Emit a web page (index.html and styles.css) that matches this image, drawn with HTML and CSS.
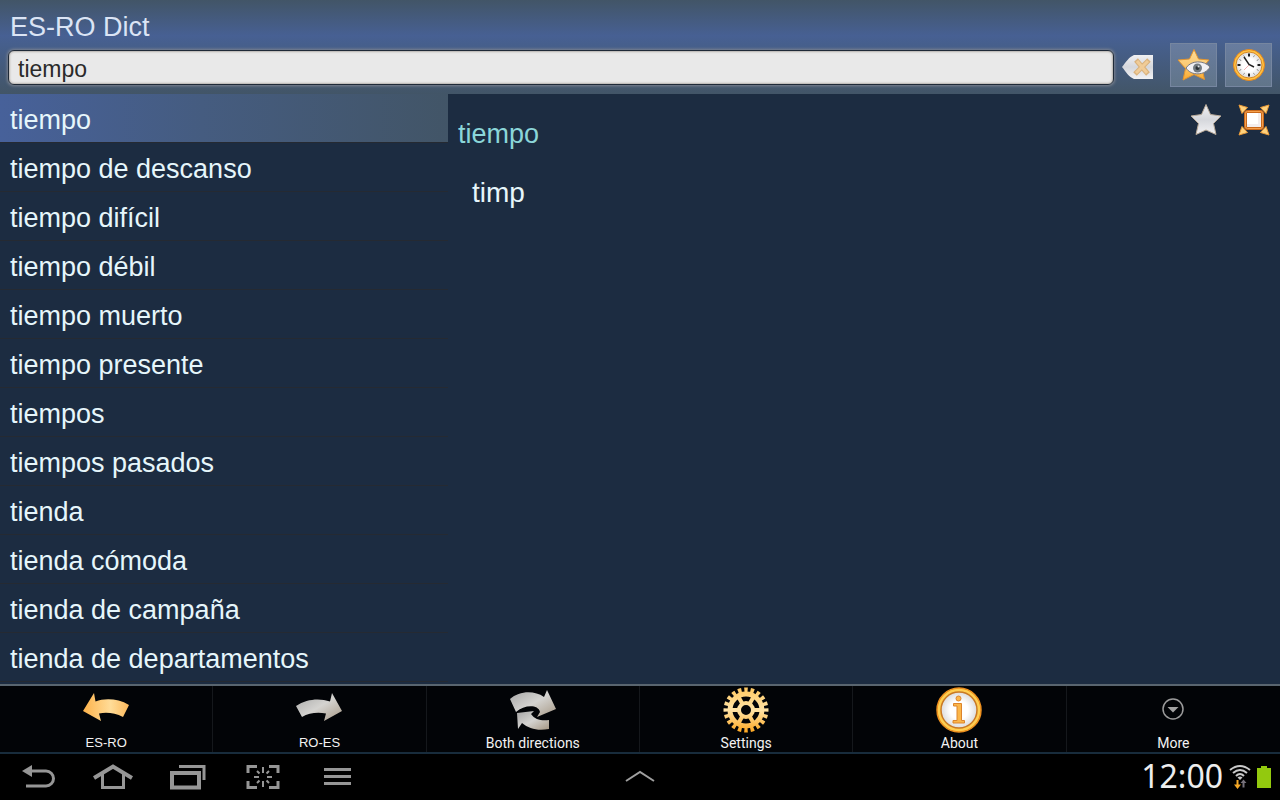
FILE: index.html
```
<!DOCTYPE html>
<html lang="es">
<head>
    <meta charset="UTF-8">
    <meta name="viewport" content="width=device-width, initial-scale=1.0">
    <title>ES-RO Dict</title>
    <link rel="stylesheet" href="styles.css">
</head>
<body>
    <!-- shared gradients for the icons -->
    <svg class="defs" width="0" height="0" aria-hidden="true">
        <defs>
            <linearGradient id="gold" x1="0" y1="0" x2="0" y2="1">
                <stop offset="0" stop-color="#fddc9a"/>
                <stop offset="0.5" stop-color="#fbcb74"/>
                <stop offset="1" stop-color="#fba92c"/>
            </linearGradient>
            <linearGradient id="goldSide" x1="0" y1="0" x2="1" y2="0">
                <stop offset="0" stop-color="#fdb24a"/>
                <stop offset="0.6" stop-color="#ffdc98"/>
                <stop offset="1" stop-color="#fcb85a"/>
            </linearGradient>
            <linearGradient id="silver" x1="0" y1="0" x2="1" y2="1">
                <stop offset="0" stop-color="#a5a5a5"/>
                <stop offset="0.5" stop-color="#d4d3d0"/>
                <stop offset="1" stop-color="#a69885"/>
            </linearGradient>
            <linearGradient id="pale" x1="0" y1="0" x2="0" y2="1">
                <stop offset="0" stop-color="#f0f0f2"/>
                <stop offset="0.5" stop-color="#d5d7dc"/>
                <stop offset="1" stop-color="#f2f2f4"/>
            </linearGradient>
            <linearGradient id="gearGold" gradientUnits="userSpaceOnUse" x1="0" y1="0" x2="0" y2="46">
                <stop offset="0" stop-color="#ffc860"/>
                <stop offset="0.5" stop-color="#ffe3a6"/>
                <stop offset="1" stop-color="#fda51c"/>
            </linearGradient>
            <radialGradient id="face">
                <stop offset="0.5" stop-color="#ffffff"/>
                <stop offset="1" stop-color="#dcdcdc"/>
            </radialGradient>
        </defs>
    </svg>

    <header class="header">
        <h1 class="title">ES-RO Dict</h1>
        <form class="search" onsubmit="return false">
            <input class="search-input" type="text" value="tiempo" aria-label="Buscar">
            <button class="clear-btn" type="button" aria-label="Borrar">
                <svg width="32" height="26" viewBox="0 0 32 26">
                    <path d="M0 13 C4 8 7 3 12 1 H31 V25 H12 C7 23 4 18 0 13 Z" fill="url(#pale)"/>
                    <path d="M14 6 L26 20 M27 6 L13 20" stroke="#d9b27d" stroke-width="5"/>
                    <path d="M15 7 L25 19 M26 7 L14 19" stroke="#f0cc98" stroke-width="3"/>
                </svg>
            </button>
            <button class="tool-btn" type="button" aria-label="Favoritos">
                <svg width="34" height="34" viewBox="0 0 34 34">
                    <path d="M17 1.500 L21.500 11 L32 12 L25 20 L27.500 31.500 L17 26.500 L6 32 L8.500 20.500 L1 12 L12.500 11 Z" fill="url(#gold)" stroke="#e2942f" stroke-width="1"/>
                    <path d="M9 20 C14 12 27 12 33 19 C28 28 14 28 9 20 Z" fill="#f0f0f4" stroke="#77767c" stroke-width="1"/>
                    <circle cx="20.500" cy="20" r="4.500" fill="#727a80"/>
                    <circle cx="20.500" cy="20" r="2" fill="#2c3236"/>
                    <circle cx="21.500" cy="18.500" r="1" fill="#dfe3e6"/>
                </svg>
            </button>
            <button class="tool-btn" type="button" aria-label="Historial">
                <svg width="34" height="34" viewBox="0 0 34 34">
                    <circle cx="17" cy="17" r="15.500" fill="#ffc342" stroke="#e5841b" stroke-width="1"/>
                    <circle cx="17" cy="17" r="13" fill="url(#face)" stroke="#d88825" stroke-width="1"/>
                    <circle cx="17" cy="17" r="10" fill="none" stroke="#444" stroke-width="2" stroke-dasharray="1 11" stroke-dashoffset="0.500" pathLength="144"/>
                    <path d="M17 5.500 V8.500 M17 25.500 V28.500 M5.500 17 H8.500 M25.500 17 H28.500" stroke="#222" stroke-width="2"/>
                    <path d="M17 17 L12 22" stroke="#f4b3b3" stroke-width="1"/>
                    <path d="M12 9 L17 16.500 L22 19" fill="none" stroke="#222" stroke-width="1.500"/>
                </svg>
            </button>
        </form>
    </header>

    <main class="content">
        <ul class="word-list">
            <li><button class="word selected" type="button">tiempo</button></li>
            <li><button class="word" type="button">tiempo de descanso</button></li>
            <li><button class="word" type="button">tiempo difícil</button></li>
            <li><button class="word" type="button">tiempo débil</button></li>
            <li><button class="word" type="button">tiempo muerto</button></li>
            <li><button class="word" type="button">tiempo presente</button></li>
            <li><button class="word" type="button">tiempos</button></li>
            <li><button class="word" type="button">tiempos pasados</button></li>
            <li><button class="word" type="button">tienda</button></li>
            <li><button class="word" type="button">tienda cómoda</button></li>
            <li><button class="word" type="button">tienda de campaña</button></li>
            <li><button class="word" type="button">tienda de departamentos</button></li>
        </ul>

        <article class="entry">
            <div class="entry-text">
                <h2 class="headword">tiempo</h2>
                <p class="translation">timp</p>
            </div>
            <div class="entry-actions">
                <button class="icon-btn" type="button" aria-label="Añadir a favoritos">
                    <svg width="32" height="32" viewBox="0 0 32 32">
                        <path d="M16 0.500 L20.500 10.500 L31 12 L23.500 19.500 L26 30.500 L16 26 L6 30.500 L8.500 19.500 L1 12 L11.500 10.500 Z" fill="url(#pale)" stroke="#b9aa98" stroke-width="1"/>
                    </svg>
                </button>
                <button class="icon-btn" type="button" aria-label="Pantalla completa">
                    <svg width="32" height="32" viewBox="0 0 32 32">
                        <path d="M1 1 L9.500 3.500 L4 9.500 Z M31 1 L22.500 3.500 L28 9.500 Z M1 31 L9.500 28.500 L4 22.500 Z M31 31 L22.500 28.500 L28 22.500 Z" fill="#ffd27c" stroke="#e99a38" stroke-width="1"/>
                        <rect x="7.500" y="7.500" width="17" height="17" rx="2" fill="#f3eeee" stroke="#c9691c" stroke-width="3"/>
                        <rect x="7.500" y="7.500" width="17" height="17" rx="2" fill="none" stroke="#f5a04c" stroke-width="1"/>
                        <rect x="9" y="9" width="11" height="11" fill="#fff"/>
                    </svg>
                </button>
            </div>
        </article>
    </main>

    <nav class="menu">
        <button class="menu-item arial" type="button">
            <span class="menu-icon">
                <svg width="48" height="48" viewBox="0 0 48 48">
                    <path d="M1 25 L12 7 L13.500 15.500 C23 12 36 12.500 47 19 L41 31 C33 27 25 26 17 27.500 L19 35 Z" fill="url(#goldSide)"/>
                </svg>
            </span>
            ES-RO
        </button>
        <button class="menu-item arial" type="button">
            <span class="menu-icon">
                <svg width="48" height="48" viewBox="0 0 48 48">
                    <path d="M47 25 L37 7 L35 15.500 C25 12 12 12.500 1 20 L7 31 C14 27 22 26 31 27.500 L29 35 Z" fill="url(#silver)"/>
                </svg>
            </span>
            RO-ES
        </button>
        <button class="menu-item" type="button">
            <span class="menu-icon">
                <svg width="48" height="48" viewBox="0 0 48 48">
                    <path d="M1 13 C10 5 25 4 35 11 L38 4 L47 23 L28 31 L31 26 C29 18 15 19 7 26 Z" fill="url(#silver)"/>
                    <path d="M8 27 L25 25 L22 28 C26 34 33 35 40 34 L40 43 C29 45 20 43 13 37 L9 43 Z" fill="url(#silver)"/>
                </svg>
            </span>
            Both directions
        </button>
        <button class="menu-item" type="button">
            <span class="menu-icon">
                <svg width="46" height="46" viewBox="0 0 46 46">
                    <g fill="none" stroke="url(#gearGold)">
                        <circle cx="23" cy="23" r="20" stroke-width="5" pathLength="40" stroke-dasharray="1.100 0.900" stroke-dashoffset="0.550"/>
                        <circle cx="23" cy="23" r="16" stroke-width="5"/>
                        <circle cx="23" cy="23" r="7" stroke-width="4"/>
                        <path d="M7 23.100 H16 M30 23 H39.100 M15 9 L19.500 17 M31 9 L26.500 17 M15 37 L19.500 29 M31 37 L26.500 29" stroke-width="4"/>
                    </g>
                </svg>
            </span>
            Settings
        </button>
        <button class="menu-item" type="button">
            <span class="menu-icon">
                <svg width="46" height="46" viewBox="0 0 46 46">
                    <circle cx="23" cy="23" r="22" fill="#ffce50" stroke="#ee901f" stroke-width="1.500"/>
                    <circle cx="23" cy="23" r="18" fill="url(#face)" stroke="#c97924" stroke-width="1.500"/>
                    <g fill="#fbb649" stroke="#dc842c" stroke-width="1">
                        <circle cx="22.500" cy="11.500" r="2.500"/>
                        <path d="M17.500 16.500 H25.500 V33.500 H28.500 V36 H17 V33.500 H21 V19 H17.500 Z"/>
                    </g>
                </svg>
            </span>
            About
        </button>
        <button class="menu-item" type="button">
            <span class="menu-icon">
                <svg width="24" height="24" viewBox="0 0 24 24">
                    <circle cx="12" cy="11" r="10" fill="none" stroke="#9b9b9b" stroke-width="1.500"/>
                    <path d="M6.500 9 H17.500 L12 14.500 Z" fill="#a3a3a3"/>
                </svg>
            </span>
            More
        </button>
    </nav>

    <footer class="system-bar">
        <div class="system-buttons">
            <button class="system-btn" type="button" aria-label="Back">
                <svg width="36" height="28" viewBox="0 0 36 28">
                    <path d="M2 8 L12 2 V14 Z" fill="#969696"/>
                    <path d="M11 8 H26 A7 7 0 0 1 26 23 H6" fill="none" stroke="#969696" stroke-width="3"/>
                </svg>
            </button>
            <button class="system-btn" type="button" aria-label="Home">
                <svg width="40" height="28" viewBox="0 0 40 28">
                    <path d="M1 15 L20 3.500 L39 15" fill="none" stroke="#969696" stroke-width="4"/>
                    <path d="M9.500 11 V24.500 H30.500 V11" fill="none" stroke="#969696" stroke-width="3"/>
                </svg>
            </button>
            <button class="system-btn" type="button" aria-label="Recent apps">
                <svg width="36" height="28" viewBox="0 0 36 28">
                    <path d="M2 10 H29 V24.500 H2 Z" fill="none" stroke="#969696" stroke-width="4"/>
                    <path d="M9 3.500 H34 V17" fill="none" stroke="#969696" stroke-width="3"/>
                </svg>
            </button>
            <button class="system-btn" type="button" aria-label="Screenshot">
                <svg width="34" height="28" viewBox="0 0 34 28">
                    <path d="M2 10 V3.500 H11 M23 3.500 H32 V10 M2 18 V24.500 H11 M23 24.500 H32 V18" fill="none" stroke="#969696" stroke-width="3"/>
                    <path d="M17 4 V10 M17 18 V24 M8 14 H13 M21 14 H26 M11 8 L13.500 10.500 M23 8 L20.500 10.500 M11 20 L13.500 17.500 M23 20 L20.500 17.500" stroke="#969696" stroke-width="2"/>
                </svg>
            </button>
            <button class="system-btn" type="button" aria-label="Menu">
                <svg width="28" height="28" viewBox="0 0 28 28">
                    <path d="M0 6.500 H27 M0 13.500 H27 M0 20.500 H27" stroke="#969696" stroke-width="3"/>
                </svg>
            </button>
        </div>
        <button class="system-btn" type="button" aria-label="Apps">
            <svg width="30" height="14" viewBox="0 0 30 14">
                <path d="M1 11 L15 2 L29 11" fill="none" stroke="#a0a0a0" stroke-width="2"/>
            </svg>
        </button>
        <div class="status">
            <time class="clock">12:00</time>
            <svg width="22" height="26" viewBox="0 0 22 26">
                <g fill="none" stroke="#c9c9c9" stroke-width="2">
                    <path d="M1 6 Q11 -2 21 6"/>
                    <path d="M4 9 Q11 3 18 9"/>
                    <path d="M7 12 Q11 8 15 12"/>
                </g>
                <path d="M8.500 13.500 Q11 11.500 13.500 13.500 L11 16 Z" fill="#c9c9c9"/>
                <path d="M7.500 16 H9.500 V20.500 H12 L8.500 25 L5 20.500 H7.500 Z" fill="#f6a927"/>
                <path d="M13.500 23.500 V19 H11.500 L14.500 15.500 L17.500 19 H15.500 V23.500 Z" fill="#76717a"/>
            </svg>
            <svg width="14" height="22" viewBox="0 0 14 22">
                <path d="M0 2 H4 V0 H10 V2 H14 V22 H0 Z" fill="#93c90e"/>
            </svg>
        </div>
    </footer>
</body>
</html>
```

FILE: styles.css
```
* {
    margin: 0;
    padding: 0;
    box-sizing: border-box;
}

body {
    font-family: "Liberation Sans", Arial, sans-serif;
    min-height: 100vh;
    background: #1c2c41;
    color: #e6f6fb;
    display: flex;
    flex-direction: column;
}

button {
    font: inherit;
    color: inherit;
    background: none;
    border: none;
    cursor: pointer;
}

svg {
    display: block;
}

.defs {
    position: absolute;
}

/* header */
.header {
    padding: 11px 8px 7px;
    background: linear-gradient(#425567, #476093 38%, #465f8c 48%, #425567);
}

.title {
    font-size: 27px;
    line-height: 32px;
    font-weight: normal;
    color: #dbe4f5;
    padding-left: 2px;
}

.search {
    display: flex;
    align-items: center;
    gap: 8px;
}

.search-input,
.clear-btn {
    margin-top: 4px;
}

.search-input {
    flex: 1;
    min-width: 0;
    height: 35px;
    padding: 5px 9px 0;
    font-family: inherit;
    font-size: 23px;
    color: #2a2a2a;
    background: #e9e9e9;
    border: 1px solid #1f2a38;
    border-radius: 6px;
    outline: none;
    box-shadow: 0 0 3px 1px #7d8490, inset 0 0 2px 1px #b5b1ad;
}

.clear-btn {
    margin-right: 8px;
}

.tool-btn {
    width: 47px;
    height: 44px;
    display: flex;
    align-items: center;
    justify-content: center;
    background: linear-gradient(#687c9f, #61758a);
    border: 1px solid #7686a0;
}

/* word list and entry */
.content {
    flex: 1;
    display: grid;
    grid-template-columns: 35% 1fr;
}

.word-list {
    list-style: none;
}

.word {
    display: block;
    width: 100%;
    padding: 4px 10px 0;
    font-size: 27px;
    line-height: 44px;
    text-align: left;
    border-bottom: 1px solid #252a32;
}

.word.selected {
    background: linear-gradient(90deg, #47619a, #455c80 45%, #425567);
}

.entry {
    display: flex;
    justify-content: space-between;
    padding: 10px;
}

.entry-text {
    padding-top: 12px;
}

.headword {
    font-size: 27px;
    line-height: 36px;
    font-weight: normal;
    color: #8bd6d9;
}

.translation {
    font-size: 28px;
    line-height: 36px;
    padding: 23px 14px 0;
}

.entry-actions {
    display: flex;
    align-items: flex-start;
    gap: 16px;
}

/* option menu */
.menu {
    display: grid;
    grid-template-columns: repeat(6, 1fr);
    background: #020407;
    border-top: 2px solid #59656f;
    border-bottom: 2px solid #182c3c;
}

.menu-item {
    display: flex;
    flex-direction: column;
    align-items: center;
    font-family: Roboto, sans-serif;
    font-size: 14px;
    line-height: 18px;
    color: #f2f2f2;
    border-right: 1px solid #15181c;
}

.menu-item:last-child {
    border-right: none;
}

.menu-item.arial {
    font-family: "Liberation Sans", Arial, sans-serif;
    font-size: 13px;
}

.menu-icon {
    height: 48px;
    display: flex;
    align-items: center;
}

/* system bar */
.system-bar {
    height: 46px;
    background: #000;
    display: grid;
    grid-template-columns: 1fr auto 1fr;
    align-items: center;
}

.system-buttons {
    display: flex;
}

.system-btn {
    width: 75px;
    display: flex;
    justify-content: center;
}

.status {
    display: flex;
    justify-content: flex-end;
    align-items: center;
    gap: 6px;
    padding-right: 9px;
}

.clock {
    font-family: "Noto Sans", sans-serif;
    font-size: 32px;
    line-height: 44px;
    padding-bottom: 2px;
    color: #ededed;
}
```
